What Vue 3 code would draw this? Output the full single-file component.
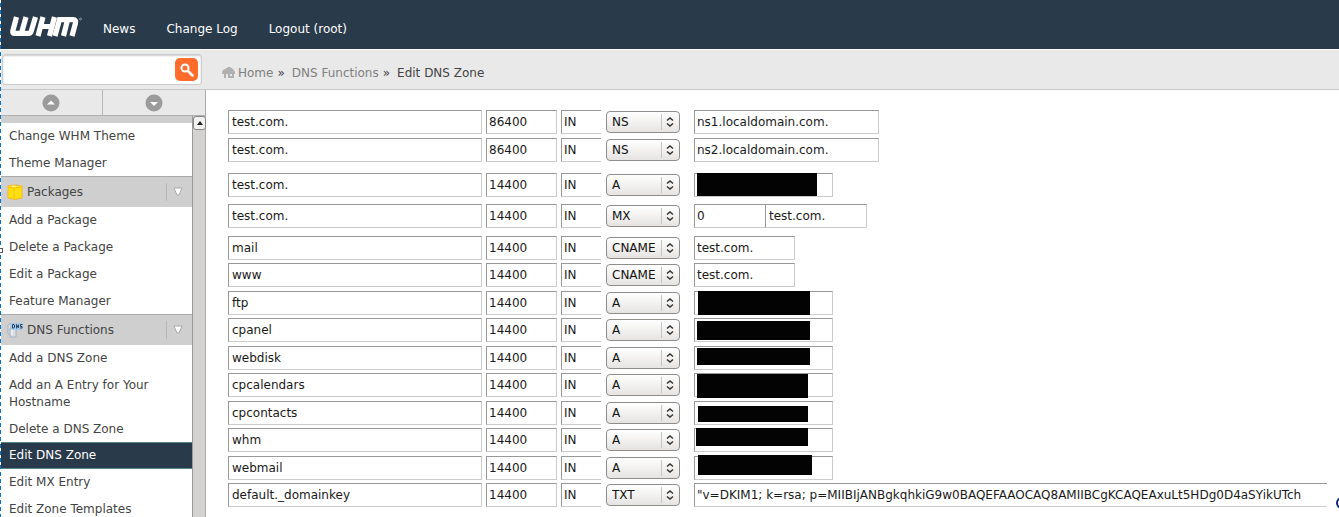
<template>
  <div class="whm">
    <!-- Top navigation -->
    <header class="topbar">
      <a class="logo" href="#" aria-label="WHM home">
        <svg width="74" height="22" viewBox="0 0 74 22">
          <g fill="none" stroke="#fff" stroke-width="5.200">
            <path d="M7.500 2L3.800 16Q3.500 18.400 5 18.400H20Q21.500 18.400 22 17L26.500 2M17 2L12.500 18" />
            <path d="M34 2L29 21M45.500 2L40.500 21M31 11.500H43" />
            <path d="M46 21L50.500 4.600H64Q67.500 4.600 66.500 8L63 21M58.500 5L54.500 21" />
          </g>
          <circle cx="71.500" cy="4" r="1" fill="none" stroke="#8d99a4" />
        </svg>
      </a>
      <nav class="topnav">
        <a v-for="item in navItems" :key="item" href="#">{{ item }}</a>
      </nav>
    </header>

    <!-- Search and breadcrumbs -->
    <div class="subbar">
      <form class="search" @submit.prevent>
        <input v-model="query" type="text" aria-label="Search" />
        <button type="submit" aria-label="Find">
          <svg width="14" height="14" viewBox="0 0 14 14" fill="none" stroke="#fff">
            <circle cx="5" cy="5" r="3.500" stroke-width="2" />
            <path d="M8 8L12.500 12.500" stroke-width="2.500" stroke-linecap="round" />
          </svg>
        </button>
      </form>
      <nav class="breadcrumbs" aria-label="Breadcrumb">
        <svg width="14" height="12" viewBox="0 0 14 12" fill="#b0b0b0">
          <path d="M0 6L1 3L4 1.500L6 0H8L11 2L13 5V7H12V11H6V7H4V11H2V7H0ZM8 7V9H10V7Z" fill-rule="evenodd" />
        </svg>
        <a href="#">Home</a>
        <span class="separator">»</span>
        <a href="#">DNS Functions</a>
        <span class="separator">»</span>
        <span class="current">Edit DNS Zone</span>
      </nav>
    </div>

    <div class="body">
      <!-- Sidebar -->
      <aside class="sidebar">
        <div class="toggles">
          <button type="button" aria-label="Collapse all">
            <svg width="18" height="18" viewBox="0 0 18 18">
              <circle cx="9" cy="9" r="8.500" fill="#9b9b9b" />
              <path d="M5 10.500L9 6.500L13 10.500Z" fill="#fff" />
            </svg>
          </button>
          <button type="button" aria-label="Expand all">
            <svg width="18" height="18" viewBox="0 0 18 18">
              <circle cx="9" cy="9" r="8.500" fill="#9b9b9b" />
              <path d="M5 8L9 12L13 8Z" fill="#fff" />
            </svg>
          </button>
        </div>
        <div class="menu-area">
          <div class="menu">
            <section v-for="section in menu" :key="section.title">
              <h2 class="menu-header" :class="{ clipped: !section.icon }">
                <svg v-if="section.icon === 'package'" width="16" height="16" viewBox="0 0 16 16">
                  <path d="M1 2L7 1L15 2V14L8 15.500L1 14Z" fill="#ffdf10" stroke="#f6b62e" />
                  <path d="M1 3L7 4L15 3M7 4V15" fill="none" stroke="#f4c400" />
                  <path d="M3 2L7 1.500L12 2.500L7 3.500Z" fill="#fff06a" />
                </svg>
                <svg v-else-if="section.icon === 'dns'" width="16" height="16" viewBox="0 0 16 16">
                  <path d="M1 3L4 1V13L1 12Z" fill="#dce1e7" stroke="#a8b1bb" />
                  <path d="M3 6H9V15H3Z" fill="#d7dee7" stroke="#a9b2bd" />
                  <path d="M5 7V13" stroke="#fff" />
                  <path d="M4 1H16V8H4Z" fill="#a9cbee" />
                  <path d="M5.500 6V2.500H7L7.500 3V5.500L7 6H5.500M9.500 6.500V2.500L11.500 6V2.500M15.500 2.500H13.500V4.500H15V6H13" fill="none" stroke="#29425f" />
                </svg>
                <span v-if="section.icon">{{ section.title }}</span>
                <svg v-if="section.icon" class="chevron" width="10" height="10" viewBox="0 0 10 10">
                  <path d="M1 1H9L6 8H4Z" fill="#fff" stroke="#aaa" />
                </svg>
              </h2>
              <ul>
                <li v-for="link in section.links" :key="link">
                  <a href="#" :class="{ active: link === activeLink }">{{ link }}</a>
                </li>
              </ul>
            </section>
          </div>
          <div class="scrollbar">
            <button type="button" aria-label="Scroll up">
              <svg width="6" height="4" viewBox="0 0 6 4"><path d="M0 4L3 0L6 4Z" fill="#222" /></svg>
            </button>
          </div>
        </div>
      </aside>

      <!-- Zone records -->
      <main class="content">
        <form @submit.prevent>
          <div v-for="(group, g) in groups" :key="g" class="group">
            <div v-for="(record, r) in group" :key="r" class="record">
              <input v-model="record.name" class="name" type="text" aria-label="Name" />
              <input v-model="record.ttl" class="ttl" type="text" aria-label="TTL" />
              <input v-model="record.cls" class="cls" type="text" aria-label="Class" />
              <div class="type">
                <select v-model="record.type" aria-label="Record type">
                  <option v-for="t in recordTypes" :key="t">{{ t }}</option>
                </select>
                <svg width="8" height="10" viewBox="0 0 8 10" fill="none" stroke="#333" stroke-width="1.500">
                  <path d="M1 3.500L4 1L7 3.500M1 6.500L4 9L7 6.500" />
                </svg>
              </div>
              <div class="values" :class="record.type.toLowerCase()">
                <input
                  v-for="(value, v) in record.values"
                  :key="v"
                  v-model="record.values[v]"
                  type="text"
                  aria-label="Value"
                />
                <span v-if="record.mask" class="mask" :style="maskStyle(record.mask)"></span>
              </div>
            </div>
          </div>
        </form>
      </main>
    </div>
    <span class="edge-line"></span>
    <span class="edge-handle"></span>
    <span class="help-ring"></span>
  </div>
</template>

<script setup>
import { ref } from 'vue'

const navItems = ['News', 'Change Log', 'Logout (root)']
const recordTypes = ['A', 'CNAME', 'MX', 'NS', 'TXT']
const query = ref('')
const activeLink = 'Edit DNS Zone'

const menu = [
  { title: 'Themes', links: ['Change WHM Theme', 'Theme Manager'] },
  {
    title: 'Packages',
    icon: 'package',
    links: ['Add a Package', 'Delete a Package', 'Edit a Package', 'Feature Manager']
  },
  {
    title: 'DNS Functions',
    icon: 'dns',
    links: [
      'Add a DNS Zone',
      'Add an A Entry for Your Hostname',
      'Delete a DNS Zone',
      'Edit DNS Zone',
      'Edit MX Entry',
      'Edit Zone Templates'
    ]
  }
]

const record = (name, ttl, type, values, mask) => ({ name, ttl, cls: 'IN', type, values, mask })

// mask: [left, top, width, height] of the bar hiding an address
const groups = ref([
  [
    record('test.com.', '86400', 'NS', ['ns1.localdomain.com.']),
    record('test.com.', '86400', 'NS', ['ns2.localdomain.com.'])
  ],
  [record('test.com.', '14400', 'A', [''], [3, 0, 120, 23])],
  [record('test.com.', '14400', 'MX', ['0', 'test.com.'])],
  [
    record('mail', '14400', 'CNAME', ['test.com.']),
    record('www', '14400', 'CNAME', ['test.com.']),
    record('ftp', '14400', 'A', [''], [4, 0, 112, 24]),
    record('cpanel', '14400', 'A', [''], [3, 3, 113, 19]),
    record('webdisk', '14400', 'A', [''], [3, 2, 113, 17]),
    record('cpcalendars', '14400', 'A', [''], [3, 1, 111, 24]),
    record('cpcontacts', '14400', 'A', [''], [4, 5, 110, 16]),
    record('whm', '14400', 'A', [''], [2, 0, 112, 18]),
    record('webmail', '14400', 'A', [''], [4, -1, 114, 20]),
    record('default._domainkey', '14400', 'TXT', [
      '"v=DKIM1; k=rsa; p=MIIBIjANBgkqhkiG9w0BAQEFAAOCAQ8AMIIBCgKCAQEAxuLt5HDg0D4aSYikUTch'
    ])
  ]
])

const maskStyle = ([left, top, width, height]) => ({
  left: left + 'px',
  top: top + 'px',
  width: width + 'px',
  height: height + 'px'
})
</script>

<style>
body {
  margin: 0;
  background: #fff;
}
</style>

<style scoped>
.whm {
  position: relative;
  display: flex;
  flex-direction: column;
  height: 100vh;
  overflow: hidden;
  font-family: "DejaVu Sans", Verdana, sans-serif;
  font-size: 12px;
  color: #333;
}

.whm *,
.whm {
  box-sizing: border-box;
}

a {
  color: inherit;
  text-decoration: none;
}

button {
  display: flex;
  align-items: center;
  justify-content: center;
  padding: 0;
  border: 0;
}

/* Top navigation */
.topbar {
  display: flex;
  align-items: center;
  flex-shrink: 0;
  height: 50px;
  padding: 3px 0 0 9px;
  background: #293a4a;
  border-bottom: 1px solid #fff;
}

.logo {
  display: flex;
}

.topnav {
  display: flex;
  gap: 31px;
  padding: 5px 0 0 20px;
  color: #fff;
}

/* Search and breadcrumbs */
.subbar {
  display: flex;
  align-items: center;
  flex-shrink: 0;
  height: 40px;
  background: #e9e9e9;
  border-bottom: 1px solid #c8c8c8;
}

.search {
  display: flex;
  align-items: center;
  width: 200px;
  height: 31px;
  margin-left: 2px;
  padding-right: 3px;
  background: #fff;
  border: 1px solid #ccc;
  border-radius: 3px;
  box-shadow: inset 0 1px 2px #ccc;
}

.search input {
  flex: 1;
  min-width: 0;
  height: 24px;
  border: 0;
  background: transparent;
  outline: 0;
}

.search button {
  width: 23px;
  height: 23px;
  border-radius: 5px;
  background: #ff6c2c;
}

.breadcrumbs {
  display: flex;
  align-items: center;
  padding: 6px 0 0 20px;
  color: #808080;
}

.breadcrumbs svg {
  margin-right: 2px;
}

.separator {
  margin: 0 7px 0 4px;
  color: #444;
}

.current {
  color: #444;
}

/* Sidebar */
.body {
  display: flex;
  flex: 1;
  min-height: 0;
}

.sidebar {
  display: flex;
  flex-direction: column;
  flex-shrink: 0;
  width: 206px;
  border-right: 1px solid #aaa;
}

.toggles {
  display: flex;
  flex-shrink: 0;
  height: 26px;
  border-bottom: 1px solid #b0b0b0;
}

.toggles button {
  flex: 1;
  background: #e9e9e9;
}

.toggles button:first-child {
  border-right: 1px solid #b8b8b8;
}

.menu-area {
  display: flex;
  flex: 1;
  min-height: 0;
}

.menu {
  flex: 1;
  overflow: hidden;
}

.menu-header {
  display: flex;
  align-items: center;
  height: 31px;
  margin: 0;
  padding: 0 9px 0 7px;
  background: #cfcfcf;
  border-top: 1px solid #aaa;
  color: #444;
  font-size: 12px;
  font-weight: normal;
}

.menu-header.clipped {
  height: 7px;
  border-top: 0;
}

.menu-header span {
  margin-left: 4px;
}

.chevron {
  box-sizing: content-box !important;
  margin-left: auto;
  padding: 4px 0 4px 6px;
  border-left: 1px solid #b8b8b8;
}

.menu ul {
  margin: 0;
  padding: 0;
  list-style: none;
}

.menu li a {
  display: block;
  padding: 5px 30px 5px 9px;
  line-height: 17px;
  color: #444;
}

.menu li:last-child a {
  padding-bottom: 4px;
}

.menu li a.active {
  margin-top: -1px;
  padding-top: 4px;
  padding-bottom: 4px;
  background: #293a4a;
  border-top: 1px solid #5d8585;
  border-bottom: 1px solid #5d8585;
  color: #fff;
}

.scrollbar {
  width: 13px;
  background: #d4d2d0;
  border-left: 1px solid #999;
}

.scrollbar button {
  width: 13px;
  height: 14px;
  border: 1px solid #888;
  border-radius: 3px;
  background: #f2f2f0;
}

/* Zone records */
.content {
  flex: 1;
  min-width: 0;
  padding: 20px 12px 0 22px;
}

.group {
  margin-bottom: 8px;
}

.group:first-child {
  margin-bottom: 11px;
}

.group:nth-child(2) {
  margin-bottom: 7px;
}

.record {
  display: flex;
  align-items: center;
  margin-bottom: 4px;
}

.group:last-child .record:nth-child(odd) {
  margin-bottom: 3px;
}

.group .record:last-child {
  margin-bottom: 0;
}

.record input {
  flex-shrink: 0;
  height: 24px;
  margin: 0;
  padding: 0 2px;
  border: 1px solid #999;
  border-right-color: #ccc;
  border-bottom-color: #ccc;
  border-radius: 0;
  background: #fff;
  color: #1a1a1a;
  font-family: inherit;
  font-size: 12px;
  outline: 0;
}

.record .name {
  width: 254px;
  padding: 0 3px;
}

.record .ttl {
  width: 71px;
  margin-left: 4px;
}

.record .cls {
  width: 40px;
  margin-left: 4px;
  border-right: 0;
}

.type {
  position: relative;
  flex-shrink: 0;
  width: 74px;
  margin: 0 14px 0 5px;
}

.type select {
  display: block;
  width: 100%;
  height: 22px;
  padding: 0 0 0 5px;
  border: 1px solid #8f8d8a;
  border-radius: 4px;
  appearance: none;
  background:
    linear-gradient(#c6c4c2, #c6c4c2) 54px 2px / 1px 16px no-repeat,
    linear-gradient(#fff, #e6e4e2);
  color: #111;
  font-family: inherit;
  font-size: 12px;
}

.type svg {
  position: absolute;
  top: 6px;
  right: 6px;
  pointer-events: none;
}

.values {
  position: relative;
  display: flex;
}

.values.ns input {
  width: 185px;
}

.values.a input {
  width: 139px;
}

.values.cname input {
  width: 101px;
}

.values.mx input {
  width: 102px;
  padding-left: 3px;
}

.values.mx input:first-child {
  width: 71px;
  padding-left: 2px;
  border-right: 0;
}

.values.txt {
  flex: 1;
  min-width: 0;
}

.values.txt input {
  flex: 1;
  min-width: 0;
  border-right: 0;
}

.mask {
  position: absolute;
  background: #030303;
}

/* Frame edges */
.edge-line {
  position: absolute;
  top: 0;
  bottom: 0;
  left: 0;
  width: 1px;
  background: repeating-linear-gradient(#fff 0 3px, #0078d7 3px 7px);
}

.edge-handle {
  position: absolute;
  top: 248px;
  left: -2px;
  width: 5px;
  height: 5px;
  border: 1px solid #555;
  background: #fff;
}

.help-ring {
  position: absolute;
  top: 497px;
  right: -9px;
  width: 12px;
  height: 12px;
  border: 2px solid #0b2a78;
  border-radius: 50%;
}
</style>
